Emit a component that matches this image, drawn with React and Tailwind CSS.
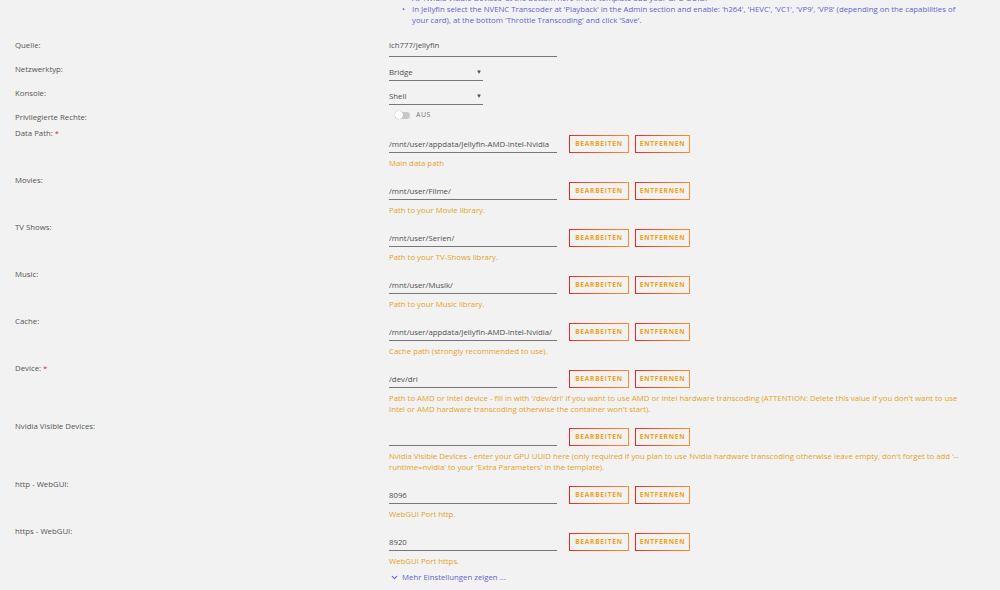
import { ChevronDown } from 'lucide-react'

const paths = [
  { label: 'Data Path:', req: true, value: '/mnt/user/appdata/Jellyfin-AMD-Intel-Nvidia', help: ['Main data path'] },
  { label: 'Movies:', value: '/mnt/user/Filme/', help: ['Path to your Movie library.'] },
  { label: 'TV Shows:', value: '/mnt/user/Serien/', help: ['Path to your TV-Shows library.'] },
  { label: 'Music:', value: '/mnt/user/Musik/', help: ['Path to your Music library.'] },
  { label: 'Cache:', value: '/mnt/user/appdata/Jellyfin-AMD-Intel-Nvidia/', help: ['Cache path (strongly recommended to use).'] },
  {
    label: 'Device:',
    req: true,
    value: '/dev/dri',
    help: [
      "Path to AMD or Intel device - fill in with '/dev/dri' if you want to use AMD or Intel hardware transcoding (ATTENTION: Delete this value if you don't want to use",
      "Intel or AMD hardware transcoding otherwise the container won't start).",
    ],
  },
  {
    label: 'Nvidia Visible Devices:',
    value: '',
    help: [
      "Nvidia Visible Devices - enter your GPU UUID here (only required if you plan to use Nvidia hardware transcoding otherwise leave empty, don't forget to add '--",
      "runtime=nvidia' to your 'Extra Parameters' in the template).",
    ],
  },
  { label: 'http - WebGUI:', value: '8096', help: ['WebGUI Port http.'] },
  { label: 'https - WebGUI:', value: '8920', help: ['WebGUI Port https.'] },
]

function GradButton({ children, w }) {
  return (
    <div className={`h-[18px] ${w} p-px bg-gradient-to-r from-[#e22828] to-[#ff8c2f]`}>
      <div className="h-full w-full bg-[#f2f2f2] flex items-center justify-center text-[6.5px] font-bold tracking-[0.8px] text-[#f0a018]">
        {children}
      </div>
    </div>
  )
}

function Label({ children, req }) {
  return (
    <div className="w-[389px] shrink-0 pl-[15px] leading-[12px] text-[#555]">
      {children}
      {req && <span className="text-[#e22828]"> *</span>}
    </div>
  )
}

export default function App() {
  return (
    <div className="w-[1000px] h-[590px] overflow-hidden bg-[#f2f2f2] text-[7.8px] font-['Open_Sans',sans-serif]">
      <div className="-mt-[7px] pl-[402px] text-[#6262d4] leading-[11px]">
        <div className="pl-[10px]">At 'Nvidia Visible Devices' at the bottom here in the template add your GPU UUID.</div>
        <div className="flex">
          <span className="w-[10px] shrink-0">•</span>
          <div className="w-[560px]">
            In Jellyfin select the NVENC Transcoder at 'Playback' in the Admin section and enable: 'h264', 'HEVC', 'VC1', 'VP9', 'VP8' (depending on the capabilities of your card), at the bottom 'Throttle Transcoding' and click 'Save'.
          </div>
        </div>
      </div>

      <div className="mt-[13px] flex h-[24px]">
        <Label>Quelle:</Label>
        <div className="w-[168px] leading-[12px] pb-[5px] border-b border-[#777] text-[#4f4f4f] self-start">ich777/jellyfin</div>
      </div>
      {['Netzwerktyp:', 'Konsole:'].map((l, i) => (
        <div key={l} className="flex h-[24px]">
          <Label>{l}</Label>
          <div className="mt-[3px] w-[94px] self-start flex justify-between leading-[12px] pb-[2px] border-b-[1.5px] border-[#777] text-[#4f4f4f]">
            <span>{i === 0 ? 'Bridge' : 'Shell'}</span>
            <span className="pr-[1px] text-[6px]">▼</span>
          </div>
        </div>
      ))}
      <div className="flex h-[16px]">
        <Label>Privilegierte Rechte:</Label>
        <div className="-mt-[1px] pl-[6px] flex items-center gap-[6px] h-[10px] self-start">
          <div className="w-[15px] h-[7px] rounded-full bg-[#c8c8c8] relative">
            <div className="absolute left-0 top-[-0.5px] w-[8px] h-[8px] rounded-full bg-white shadow-[0_0_1px_#999]" />
          </div>
          <span className="text-[7px] tracking-[0.5px] text-[#777]">AUS</span>
        </div>
      </div>

      {paths.map((p) => (
        <div key={p.label} className="flex pb-[5px]">
          <Label req={p.req}>{p.label}</Label>
          <div className="pt-[8px]">
            <div className="flex items-end">
              <div className="w-[168px] h-[18px] leading-[12px] pt-[3px] border-b border-[#777] text-[#4f4f4f]">{p.value}</div>
              <div className="ml-[12px] flex gap-[6px]">
                <GradButton w="w-[60px]">BEARBEITEN</GradButton>
                <GradButton w="w-[55px]">ENTFERNEN</GradButton>
              </div>
            </div>
            <div className="mt-[5px] leading-[11px] text-[#e5a31c]">
              {p.help.map((h) => (
                <div key={h} className="whitespace-nowrap">{h}</div>
              ))}
            </div>
          </div>
        </div>
      ))}

      <div className="pl-[390px] flex items-center gap-[3px] leading-[11px] text-[#6262d4]">
        <ChevronDown className="w-[9px] h-[9px]" strokeWidth={3} />
        <span>Mehr Einstellungen zeigen ...</span>
      </div>
    </div>
  )
}
